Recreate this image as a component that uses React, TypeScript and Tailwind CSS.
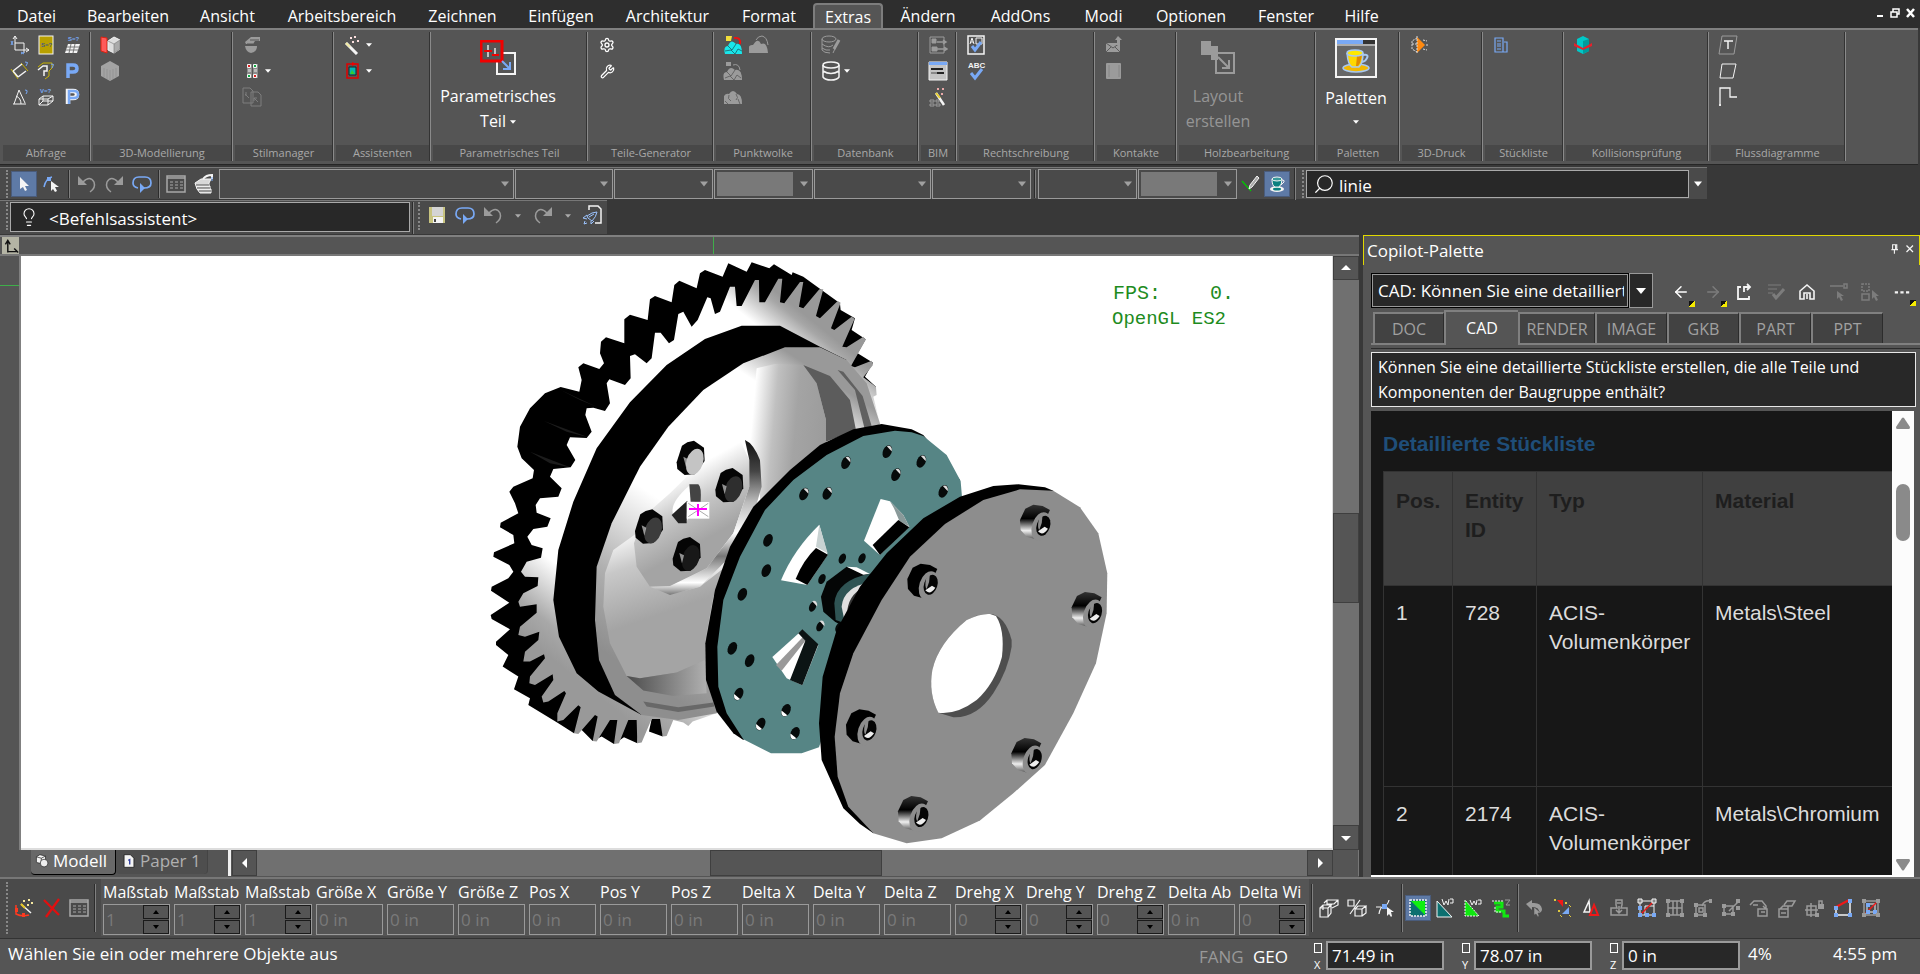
import type { ReactNode } from 'react';
import { Settings, Wrench, ArrowLeft, ArrowRight, Lightbulb, Search } from 'lucide-react';

const W = '#f4f4f4';
const G = '#9b9b9b';
const B = '#79a9f5';

/* All toolbar glyphs are drawn in a 20x20 box */
const glyphs: Record<string, ReactNode> = {
  coords: (
    <g fill="none" stroke={W}>
      <path d="M5 1v14h14M3 4l2-3 2 3M16 13l3 2-3 2M5 8h9v10" />
      <path d="M1 6l2 4M3 6l-2 4M11 17l3 2M14 17l-3 2" stroke={B} />
    </g>
  ),
  area: (
    <g>
      <rect x="3" y="1" width="14" height="18" fill="#b8a000" stroke={W} />
      <text x="5" y="12" fontSize="6" fontFamily="Liberation Sans" fontWeight="bold" fill="#4a5a80">S=?</text>
    </g>
  ),
  surface: (
    <g>
      <text x="6" y="6" fontSize="6" fontFamily="Liberation Sans" fontWeight="bold" fill={B}>S=?</text>
      <path d="M6 9h12l-3 9H3z" fill={W} />
      <path d="M5 12h12M4 15h12M9 9l-2 9M13 9l-2 9" stroke="#777" fill="none" />
    </g>
  ),
  dist: (
    <g fill="none">
      <path d="M1 8l7 10M11 2l7 8" stroke="#c8b400" />
      <path d="M3 10l9-7M8 16l8-6M3 10l5 6" stroke={W} strokeWidth="1.500" />
      <path d="M15 1q4 0 2 2l-1 2" stroke={B} />
    </g>
  ),
  poly: (
    <g fill="none">
      <path d="M2 6l5-4h9v5l-3 3v5l-4 3" stroke="#c8b400" />
      <path d="M2 9l5-4h4v5h-3v5" stroke={W} strokeWidth="1.500" />
      <path d="M15 3q4 0 2 2l-1 2" stroke={B} />
    </g>
  ),
  p: <path d="M6 17V4h5q4 0 4 3.500t-4 3.500H7" fill="none" stroke={B} strokeWidth="3.500" />,
  pw: (
    <g fill="none">
      <path d="M6 17V4h5q4 0 4 3.500t-4 3.500H7" stroke={W} strokeWidth="4.500" />
      <path d="M7 17V4h5q4 0 4 3.500t-4 3.500H7" stroke={B} strokeWidth="2.500" />
    </g>
  ),
  angle: (
    <g fill="none" stroke={W}>
      <path d="M3 17h13M4 17L9 3M9 3l6 13M6 9q5 2 5 8" />
      <path d="M15 3q3 0 2 2l-1 2" stroke={B} />
    </g>
  ),
  volume: (
    <g fill="none" stroke={W}>
      <path d="M3 12h9v6H3zM3 12l4-3h10l-5 3M17 9v5l-5 4M7 9v5h10M7 14l-4 4" />
      <text x="4" y="6" fontSize="6" fontFamily="Liberation Sans" fontWeight="bold" fill={B} stroke="none">V=?</text>
    </g>
  ),
  cubeRed: (
    <g>
      <path d="M1 2l6 1v15l-6-2z" fill="#ff5a5a" stroke="#d21" />
      <path d="M8 6l6-4 6 3v9l-6 4-6-3z" fill="#ddd" stroke={W} />
      <path d="M8 6l6 3v9l6-4V5l-6 4" fill="#aaa" stroke="#777" strokeWidth=".6" />
    </g>
  ),
  cubeGray: (
    <g>
      <path d="M1 5l9-5 9 5v10l-9 5-9-5z" fill="#a3a3a3" />
      <path d="M10 9v11M4 7v9M7 8v10M13 8v10M16 7v9" stroke="#939393" fill="none" />
    </g>
  ),
  hand: (
    <g fill={G}>
      <path d="M3 7l6-5h9v4h-5l-2 3H4z" />
      <path d="M3 11h12q0 6-6 7-5-1-6-7z" />
      <path d="M8 5h9M5 9h6" stroke="#555" />
    </g>
  ),
  swatch: (
    <g>
      <path d="M5 3h5v14H5zM11 3h5v14h-5z" fill="#8a8a8a" />
      <path d="M5.500 3.500h3v3h-3zM11.500 13.500h3v3h-3z" fill="#d22" stroke={W} />
      <path d="M11.500 3.500h3v3h-3zM5.500 13.500h3v3h-3z" fill="#1a4" stroke={W} />
      <path d="M6 8h3v3H6zM12 8h3v3h-3z" fill="#bbb" />
    </g>
  ),
  copy: (
    <g fill="none" stroke="#7e7e7e">
      <path d="M1 1h7l3 3v12H1zM9 5h7l3 3v11H9zM3 7l4 4M4 5v4M12 11l4 4M12 11h3M12 11v3" />
    </g>
  ),
  wand: (
    <g fill="none">
      <path d="M3 8l11 11" stroke={W} strokeWidth="3" />
      <path d="M3 8l4 4" stroke="#efe8a0" strokeWidth="2" />
      <path d="M7 2l2 2M7 4l2-2M11 1l2 2M11 3l2-2M9 6l2 2M9 8l2-2M14 5l2 2M14 7l2-2" stroke="#fce0e0" />
    </g>
  ),
  frame: (
    <g>
      <path d="M4 3h11v14H4z" fill="none" stroke="#e00000" strokeWidth="1.500" />
      <path d="M6 6h7v8H6z" fill="#00b4b4" stroke="#222" />
      <path d="M7 13l2-4 3 4z" fill="#3c3" />
      <path d="M9 1l4 2-4 2z" fill="#e00" />
    </g>
  ),
  cloudCyan: (
    <g>
      <path d="M2 19q-2-8 3-8 3-8 8-2 6-2 6 10z" fill="#19e6ea" />
      <path d="M5 11l4 4 4-6M2 16l6-1 4 4 3-5 4 2" stroke="#187a80" fill="none" />
      <path d="M3 1h6l-1 5H3z" fill="#f2de3a" />
      <path d="M11 3q7-1 6 6" stroke="#e11" strokeWidth="2" fill="none" />
    </g>
  ),
  cloud: (
    <g>
      <path d="M0 18q-2-9 4-8 5-8 8-1 6-3 7 9z" fill={G} />
      <path d="M7 5q2-4 6-4 5 1 6 9" stroke={G} fill="none" />
    </g>
  ),
  cloudGray: (
    <g>
      <path d="M1 19q-2-8 3-8 3-7 8-2 7-2 7 10z" fill={G} />
      <path d="M4 11l4 4 4-6M2 17l5-2 4 4 3-5 4 3" stroke="#666" fill="none" />
      <path d="M3 1h5v4H3z" fill={G} />
      <path d="M10 4q6-2 7 5" stroke={G} fill="none" />
    </g>
  ),
  cloudPlain: (
    <g>
      <path d="M1 17V9q2-3 5-2 4-6 8 0 5 0 5 10z" fill={G} />
      <path d="M6 8q-2 4 2 6M13 7q3 4 0 6M2 14l3 3M15 12l2 5" stroke="#666" fill="none" />
    </g>
  ),
  dbPen: (
    <g fill="none" stroke={G}>
      <ellipse cx="8" cy="4" rx="7" ry="3" />
      <path d="M1 4v11q2 3 8 3M1 9q7 5 11 1M1 13q4 3 8 2M18 5l-6 13" />
      <path d="M18 5l-5 9" strokeWidth="3" />
    </g>
  ),
  db: (
    <g fill="none" stroke={W} strokeWidth="1.500">
      <ellipse cx="10" cy="4" rx="8" ry="3" />
      <path d="M2 4v12q2 3 8 3t8-3V4M2 10q8 5 16 0M2 7v6" />
    </g>
  ),
  bimIn: (
    <g fill="none" stroke={G}>
      <path d="M2 2h14v16H2z" />
      <path d="M4 4h4v4H4zM4 12h5v4H4z" fill={G} />
      <path d="M9 7h8M15 5l3 2-3 2M9 14h10M16 12l3 2-3 2" strokeWidth="1.500" />
    </g>
  ),
  list: (
    <g>
      <path d="M1 1h18v18H1z" fill="#c4c4c4" stroke={W} />
      <path d="M1 1h18v3H1z" fill={B} />
      <path d="M3 8h12M3 12h13" stroke="#222" strokeWidth="2" />
      <path d="M3 12h6" stroke="#888" strokeWidth="2" />
    </g>
  ),
  bimWand: (
    <g fill="none">
      <path d="M8 6l8 12" stroke={W} strokeWidth="2.500" />
      <path d="M8 6l4 5" stroke="#e8d030" strokeWidth="2" />
      <path d="M9 1l2 2M9 3l2-2M14 1l2 2M14 3l2-2M13 6l2 2M13 8l2-2" stroke="#e8a8a8" />
      <path d="M2 13h4v2H2zM8 13h3v2H8zM2 17h4v2H2zM8 17h4v2H8z" stroke={G} />
    </g>
  ),
  spellDoc: (
    <g fill="none">
      <path d="M2 1h16v18H2z" stroke={W} strokeWidth="1.500" />
      <path d="M4 9l2-6 2 6M5 7h2M10 3h6v6h-6z" stroke={W} />
      <path d="M6 11l3 4 6-8" stroke={B} strokeWidth="3" />
    </g>
  ),
  spell: (
    <g fill="none">
      <text x="2" y="7" fontSize="8" fontFamily="Liberation Sans" fontWeight="bold" fill={W}>ABC</text>
      <path d="M5 12l4 5 7-9" stroke={B} strokeWidth="3" />
    </g>
  ),
  mail: (
    <g fill={G}>
      <path d="M2 8h14v9H2z" />
      <path d="M2 8l7 5 7-5M2 17l5-5M16 17l-5-5" stroke="#5a5a5a" fill="none" />
      <path d="M14 1l4 4h-2v5h-3V5h-2z" />
    </g>
  ),
  book: (
    <g>
      <rect x="2" y="2" width="15" height="16" rx="1" fill={G} />
      <path d="M5 4v12M15 4v12" stroke="#868686" />
    </g>
  ),
  print3d: (
    <g>
      <path d="M8 2l8 8-8 8z" fill="#ff8a10" />
      <path d="M8 1v18M8 3L3 6v8l5 3M3 9h5M14 5l4 1M14 14l4 1M17 10h3" stroke="#ddd" fill="none" strokeDasharray="2 1" />
    </g>
  ),
  bom: (
    <g fill="none" stroke={B}>
      <path d="M3 3h8v14H3zM12 7h3v10h-4M5 6h4M5 9h4M5 11h4M5 14h4" strokeWidth="1.200" />
    </g>
  ),
  collide: (
    <g>
      <path d="M4 4l6-3 6 3v12l-6 3-6-3z" fill="#00c8c8" />
      <path d="M10 6v13l6-3V4z" fill="#009c9c" />
      <path d="M1 8l9 5 9-5v3l-9 4-9-4z" fill="#e8202a" />
    </g>
  ),
  flowT: (
    <g fill="none" stroke={W}>
      <path d="M4 1h15l-3 18H1z" stroke={G} />
      <path d="M6 6h9M10 6v8" strokeWidth="1.500" />
    </g>
  ),
  flow: <path d="M4 3h14l-3 14H2z" fill="none" stroke={W} />,
  flowLine: <path d="M2 19V1h10v9h6M16 10h3M1 18h2" fill="none" stroke={W} strokeWidth="1.300" />,
  cursor: <path d="M6 3v12l3-2 2 4 2-1-2-4h4z" fill={W} />,
  node: (
    <g>
      <path d="M2 13Q4 4 10 3" stroke={B} strokeWidth="1.500" fill="none" />
      <path d="M5 3h4v4H5z" fill={B} />
      <path d="M9 7v10l2-2 2 3 2-1-2-4h4z" fill={W} />
    </g>
  ),
  undo: (
    <g fill="none" stroke={G} strokeWidth="1.500">
      <path d="M6 8q7-7 11 0 2 6-4 10" />
      <path d="M1 2v9h9z" fill={G} stroke="none" />
    </g>
  ),
  redo: (
    <g fill="none" stroke={G} strokeWidth="1.500">
      <path d="M14 8Q7 1 3 8q-2 6 4 10" />
      <path d="M19 2v9h-9z" fill={G} stroke="none" />
    </g>
  ),
  loop: (
    <g fill="none" stroke={B} strokeWidth="1.700">
      <path d="M6 14q-5-1-5-5 0-6 6-6h6q6 0 6 6 0 5-7 5" />
      <path d="M8 9v10l5-5z" fill={B} stroke="none" />
    </g>
  ),
  sheet: (
    <g fill="none" stroke="#a8a8a8">
      <path d="M1 2h18v16H1zM1 4h18" strokeWidth="1.500" />
      <path d="M4 8h3M9 8h3M14 8h3M4 11h3M9 11h3M14 11h3M4 14h3M9 14h3M14 14h3" />
    </g>
  ),
  layers: (
    <g>
      <path d="M1 9l6-4h10l-2 4v3H2zM2 12h14v3H3zM3 15h14v4H6z" fill="#d8d8d8" stroke={W} />
      <path d="M2 11h13M3 14h13M5 17h12" stroke="#555" />
      <path d="M9 5q3-4 9-4v4" stroke={W} fill="none" strokeWidth="2" />
      <path d="M18 3v4" stroke={B} />
    </g>
  ),
  pencil: (
    <g>
      <path d="M1 7l9 10" stroke="#00c800" strokeWidth="1.300" />
      <path d="M16 2l2 2-7 9-3 2 1-4z" fill="#aaa" stroke={W} />
    </g>
  ),
  cup: (
    <g>
      <ellipse cx="10" cy="15" rx="7" ry="3" fill={W} />
      <ellipse cx="10" cy="15" rx="4" ry="1.500" fill="#0b8080" />
      <path d="M5 5q0 7 3 8h4q3-2 3-8" fill="#0b8080" stroke={W} />
      <ellipse cx="10" cy="5" rx="5" ry="2" fill="#3a9a9a" stroke={W} />
      <path d="M15 6q3 0 2 2l-3 3" fill="none" stroke={W} />
    </g>
  ),
  disk: (
    <g>
      <path d="M2 2h16v16H2z" fill="#c8c480" />
      <path d="M5 2h11v9H5z" fill="#d4d4d4" />
      <path d="M6 12h10v6H6z" fill={W} />
      <path d="M7 14h2v3H7z" fill="#444" />
    </g>
  ),
  docRocket: (
    <g fill="none">
      <path d="M6 5V1h9l3 3v14h-6" stroke={W} strokeWidth="1.500" />
      <path d="M4 11q5-4 10-4-1 5-5 9l-4-3zM4 10l-4 3 4 1M8 16v3l3-3M2 16l-1 3 3-1M6 12l5-3" stroke="#9cc4ff" />
    </g>
  ),
  origin: <path d="M6 18V4M3 8l3-5 3 5M6 17h12M14 13l5 5" stroke="#111" strokeWidth="1.800" fill="none" />,
  tabCube: (
    <g>
      <path d="M2 4l5-3 8 2v6l-5 5-8-2z" fill={W} stroke="#222" />
      <path d="M2 4l7 2 6-3M9 6v6" stroke="#222" fill="none" />
      <circle cx="13" cy="13" r="5.500" fill="#eee" stroke="#222" />
    </g>
  ),
  tabPage: (
    <g>
      <path d="M3 1h9l5 5v13H3z" fill={W} stroke="#111" />
      <path d="M9 9l2-1v7" stroke="#3340a0" fill="none" strokeWidth="2" />
    </g>
  ),
  selWand: (
    <g fill="none">
      <path d="M2 7v9q6 3 13 1" stroke="#ff3a20" strokeWidth="1.500" />
      <path d="M1 10h3v4H1zM8 15h3v4H8z" fill="#ff3a20" />
      <path d="M7 6l10 9" stroke={W} strokeWidth="1.500" />
      <path d="M7 6l4 4" stroke="#e8c820" strokeWidth="2" />
      <path d="M9 2h2v2H9zM14 1h2v2h-2zM17 4h2v2h-2zM13 6h2v2h-2z" fill="#f6e8a0" />
    </g>
  ),
  cross: <path d="M2 2l15 15M17 1L4 19" stroke="#e01010" strokeWidth="2.300" fill="none" />,
  boxPipe: (
    <g fill="none" stroke={W} strokeWidth="1.200">
      <path d="M1 10h8v9H1zM1 10l3-3h8l-3 3M12 7v8l-3 4M4 7v5M5 5l3-3h11v5l-6 3M8 2v4h7l4-4" />
    </g>
  ),
  boxSlash: (
    <g fill="none" stroke={W} strokeWidth="1.200">
      <path d="M1 2h6v6H1zM13 2L3 16M8 11h7v7H8zM8 11l3-3h8l-4 3M19 8v7l-4 3" />
    </g>
  ),
  curveSel: (
    <g fill="none" stroke={W} strokeWidth="1.200">
      <path d="M4 16q1-7 5-8t5-6M1 9h5" />
      <path d="M7 6h5v5H7z" fill={B} stroke="none" />
      <path d="M12 9v9l2-2 2 3 1-1-1-4h3z" fill={W} stroke="none" />
    </g>
  ),
  triBlue: (
    <g>
      <path d="M2 2h16v16H2z" fill="#0c7070" stroke={W} strokeWidth="1.500" strokeDasharray="2 1" />
      <path d="M3 3h14v14z" fill="#10f010" />
    </g>
  ),
  triTeal: (
    <g>
      <path d="M2 3v16h15z" fill="#0c7070" stroke={W} />
      <path d="M7 1l2 6 2-4 2 4 1-6M15 1h3v4h-3" stroke={W} fill="none" />
    </g>
  ),
  triGreen: (
    <g>
      <path d="M2 2v16h14z" fill="#10e810" stroke={W} strokeDasharray="2 1" />
      <path d="M7 2l2 5 2-4 2 4 1-5M15 2h3v4h-3" stroke={W} fill="none" />
    </g>
  ),
  pathGreen: (
    <g fill="none">
      <path d="M3 5h8v4H6v4h7v5h5" stroke="#10e810" strokeWidth="3" />
      <path d="M1 3h11M4 9v5h7" stroke={W} strokeDasharray="2 1" />
      <path d="M14 2h5l-4 5h4" stroke={G} />
    </g>
  ),
  undoSel: (
    <g>
      <path d="M1 6l6-4v3q9-1 10 6 0 3-3 4 1-6-7-6v3z" fill={G} />
      <path d="M9 9v8l2-1 2 3 1-1-1-3h3z" fill={G} stroke="#4a4a4a" strokeWidth=".5" />
    </g>
  ),
  redSel: (
    <g>
      <path d="M4 2h6v7z" fill="#f01818" />
      <path d="M16 9v7h-7z" fill={B} />
      <path d="M1 1l2 2M1 3l2-2M12 4l2 2M12 6l2-2M16 7l2 2M5 12l2 2M5 14l2-2M7 17l2 2M16 17l2 2" stroke="#e0c840" />
    </g>
  ),
  triMirror: (
    <g fill="none" strokeWidth="1.500">
      <path d="M8 3L3 14h6z" stroke={W} />
      <path d="M13 7l-4 10h8z" stroke="#f01818" strokeWidth="2" />
    </g>
  ),
  stamp: (
    <g fill="none" stroke={G} strokeWidth="1.500">
      <path d="M7 2h6v5l-1 3h6v7H2v-7h6L7 7zM2 17h16M8 5h4M10 8v6M7 12l3 3 3-3" />
    </g>
  ),
  nodesSlash: (
    <g fill="none">
      <path d="M3 3h14v14H3zM8 8h9M8 8v9" stroke={W} />
      <path d="M2 18L18 2" stroke="#f01818" strokeWidth="1.500" />
      <path d="M1 8h4v4H1zM1 15h4v4H1zM8 15h4v4H8zM15 15h4v4h-4z" fill={B} />
      <path d="M1 1h4v4H1zM15 1h4v4h-4z" fill="#888" stroke={W} />
    </g>
  ),
  grid: (
    <g fill="none" stroke={G} strokeWidth="1.500">
      <path d="M3 3h14v14H3zM3 10h14M8 3v14M12 3v14" />
      <path d="M1 1h4v4H1zM15 1h4v4h-4zM1 15h4v4H1zM15 15h4v4h-4z" fill={G} stroke="none" />
    </g>
  ),
  nodesCurve: (
    <g fill="none" stroke={G} strokeWidth="1.500">
      <path d="M3 7h9v10H3zM6 10h4v4H6zM9 8q2-6 9-5" />
      <path d="M1 5h4v4H1zM1 15h4v4H1zM10 15h4v4h-4zM16 1h3v4h-3z" fill={G} stroke="none" />
    </g>
  ),
  nodesArrow: (
    <g fill="none" stroke={G} strokeWidth="1.500">
      <path d="M3 8h9v8H3zM8 13L18 3" />
      <path d="M1 6h4v4H1zM1 14h4v4H1zM10 14h4v4h-4zM15 8h4v4h-4zM15 1h4v4h-4z" fill={G} stroke="none" />
    </g>
  ),
  turnBox: (
    <g fill="none" stroke={G} strokeWidth="1.500">
      <path d="M1 7l4-4h8l4 5v3M4 7h5M9 11h9v7H9zM12 14h4M14 8l3 3" />
    </g>
  ),
  boxBack: (
    <g fill="none" stroke={G} strokeWidth="1.500">
      <path d="M7 7l3-4h8l-3 5H6l-3 3M2 11h9v8H2zM4 15h5M11 8v5" />
    </g>
  ),
  lockBox: (
    <g fill="none" stroke={G} strokeWidth="1.500">
      <path d="M2 8h9v9H2zM6 5v14M0 12h13M14 7V3h3v4" />
      <path d="M13 6h6v5h-6zM10 15h4v4h-4z" fill={G} stroke="none" />
    </g>
  ),
  quad: (
    <g fill="none">
      <path d="M3 10v7h14V3" stroke={W} strokeWidth="1.500" />
      <path d="M3 9L16 2" stroke="#f01818" strokeWidth="2" />
      <path d="M1 8h4v4H1zM1 15h4v4H1zM15 15h4v4h-4zM15 1h4v4h-4z" fill={B} />
    </g>
  ),
  gridRed: (
    <g fill="none">
      <path d="M3 3h14v14H3z" stroke={G} strokeWidth="1.500" />
      <path d="M6 6h8v8H6z" stroke={W} />
      <path d="M3 17L17 3" stroke="#f01818" strokeWidth="1.500" />
      <path d="M5 5h4v4H5zM5 12h4v4H5zM12 12h4v4h-4z" fill={B} />
      <path d="M1 1h4v4H1zM15 1h4v4h-4zM1 15h4v4H1zM15 15h4v4h-4z" fill={G} />
    </g>
  ),
  share: <path d="M7 5H4v12h11v-3M10 10V5h6M13 2l3 3-3 3" fill="none" stroke={W} strokeWidth="1.800" />,
  checkList: (
    <g fill="none" stroke="#7c7c7c">
      <path d="M2 3h13M2 7h9M2 11h5" />
      <path d="M7 12l3 4 8-9" strokeWidth="3" />
    </g>
  ),
  home: <path d="M3 9l7-6 7 6v8h-4v-6H7v6H3zM10 12v5" fill="none" stroke={W} strokeWidth="1.600" />,
  selLine: (
    <g fill="none" stroke="#7c7c7c" strokeWidth="1.500">
      <path d="M1 4h13M15 2h3v4h-3z" />
      <path d="M8 9v8l2-2 2 4 2-1-2-4h3z" fill="#7c7c7c" stroke="none" />
    </g>
  ),
  selBoxes: (
    <g fill="none" stroke="#7c7c7c" strokeWidth="1.500">
      <path d="M2 2h7v7H2z" strokeDasharray="2 1" />
      <path d="M2 12h7v6H2z" />
      <path d="M12 8v9l2-2 2 4 2-1-2-4h3z" fill="#7c7c7c" stroke="none" />
    </g>
  ),
  dots: <path d="M1 9h4v3H1zM8 9h4v3H8zM15 9h4v3h-4z" fill={W} />,
  pin: <path d="M6 3h7v8H6zM11 3v8M4 11h11M9 11v7" fill="none" stroke={W} strokeWidth="1.800" />,
  close: <path d="M3 3l13 13M16 3L3 16" fill="none" stroke={W} strokeWidth="2.500" />,
};

function Glyph({ name, className = 'size-5' }: { name: string; className?: string }) {
  return (
    <svg viewBox="0 0 20 20" className={`shrink-0 ${className}`} aria-hidden="true">
      {glyphs[name]}
    </svg>
  );
}

function Arrow({ className = 'size-2 fill-white' }: { className?: string }) {
  return (
    <svg viewBox="0 0 10 10" className={`shrink-0 ${className}`} aria-hidden="true">
      <path d="M0 2h10L5 8z" />
    </svg>
  );
}

function ToolButton({ name, active, className = 'w-7' }: { name: string; active?: boolean; className?: string }) {
  return (
    <button
      type="button"
      aria-label={name}
      className={`flex h-[26px] shrink-0 items-center justify-center ${className} ${active ? 'border border-[#4a5c7c] bg-[#5e7aa6]' : ''}`}
    >
      <Glyph name={name} />
    </button>
  );
}

const menu = [
  { label: 'Datei', w: 'w-[71px]' },
  { label: 'Bearbeiten', w: 'w-28' },
  { label: 'Ansicht', w: 'w-[87px]' },
  { label: 'Arbeitsbereich', w: 'w-[142px]' },
  { label: 'Zeichnen', w: 'w-[99px]' },
  { label: 'Einfügen', w: 'w-[98px]' },
  { label: 'Architektur', w: 'w-[115px]' },
  { label: 'Format', w: 'w-[88px]' },
  { label: 'Extras', w: 'w-[70px]' },
  { label: 'Ändern', w: 'w-[90px]' },
  { label: 'AddOns', w: 'w-[95px]' },
  { label: 'Modi', w: 'w-[71px]' },
  { label: 'Optionen', w: 'w-[104px]' },
  { label: 'Fenster', w: 'w-[86px]' },
  { label: 'Hilfe', w: 'w-[65px]' },
];

function MenuBar() {
  return (
    <nav className="flex h-7 shrink-0 items-end bg-[#2e2e2e] pl-px text-base">
      {menu.map((m) => (
        <button
          key={m.label}
          type="button"
          className={`h-[25px] shrink-0 text-center ${m.w} ${
            m.label === 'Extras' ? 'rounded-t-sm border-2 border-b-0 border-[#7d7d7d] bg-[#555] leading-[22px]' : 'leading-[26px]'
          }`}
        >
          {m.label}
        </button>
      ))}
      <div className="ml-auto flex h-full items-start gap-1.5 pt-2 pr-1">
        <button type="button" aria-label="Minimieren">
          <svg viewBox="0 0 8 10" className="h-2.5 w-2"><path d="M1 8h6" stroke="#fff" strokeWidth="2" /></svg>
        </button>
        <button type="button" aria-label="Wiederherstellen">
          <svg viewBox="0 0 10 10" className="size-2.5"><path d="M1 4h6v5H1zM3 4V1h6v5H7" fill="none" stroke="#fff" strokeWidth="1.500" /></svg>
        </button>
        <button type="button" aria-label="Schließen">
          <svg viewBox="0 0 10 10" className="size-2.5"><path d="M1 1l7 8M8 1L1 9" stroke="#fff" strokeWidth="2.500" /></svg>
        </button>
      </div>
    </nav>
  );
}

function Section({ label, w, children }: { label: string; w: string; children?: ReactNode }) {
  return (
    <div className={`mt-0.5 flex h-[129px] shrink-0 flex-col border-r border-[#8a8a8a] shadow-[inset_-1px_0_0_#333] ${w}`}>
      <div className="flex-1 overflow-hidden pl-1.5">{children}</div>
      <div className="mr-px ml-0.5 h-4 truncate bg-[#484848] text-center text-[11px] leading-4 text-[#a8a8a8]">{label}</div>
    </div>
  );
}

function Tools({ rows }: { rows: string[][] }) {
  return (
    <div>
      {rows.map((r, i) => (
        <div key={i} className="flex">
          {r.map((n) =>
            n === 'arrow' ? (
              <Arrow key={n} className="mt-2.5 size-1.5 fill-white" />
            ) : (
              <ToolButton key={n} name={n} className="w-[26px]" />
            )
          )}
        </div>
      ))}
    </div>
  );
}

function BigButton({ lines, icon, dim, arrow }: { lines: string[]; icon: ReactNode; dim?: boolean; arrow?: 'inline' | 'below' }) {
  return (
    <button type="button" className={`flex w-full flex-col items-center text-base leading-[25px] ${dim ? 'text-[#959595]' : ''}`}>
      {icon}
      {lines.map((l, i) => (
        <span key={l} className="flex items-center gap-1">
          {l}
          {arrow === 'inline' && i === lines.length - 1 && <Arrow className="size-1.5 fill-white" />}
        </span>
      ))}
      {arrow === 'below' && <Arrow className="mt-2 size-1.5 fill-white" />}
    </button>
  );
}

function Ribbon() {
  return (
    <div className="flex h-[139px] shrink-0 flex-col bg-[#383838]">
      <div className="mr-0.5 flex h-[137px] border-t-2 border-[#808080] border-b border-b-[#262626] bg-[#555] pl-px">
        <Section label="Abfrage" w="w-[90px]">
          <Tools rows={[['coords', 'area', 'surface'], ['dist', 'poly', 'p'], ['angle', 'volume', 'pw']]} />
        </Section>
        <Section label="3D-Modellierung" w="w-[142px]"><Tools rows={[['cubeRed'], ['cubeGray']]} /></Section>
        <Section label="Stilmanager" w="w-[101px]"><Tools rows={[['hand'], ['swatch', 'arrow'], ['copy']]} /></Section>
        <Section label="Assistenten" w="w-[97px]"><Tools rows={[['wand', 'arrow'], ['frame', 'arrow']]} /></Section>
        <Section label="Parametrisches Teil" w="w-[157px]">
          <div className="w-[122px]">
            <BigButton
              lines={['Parametrisches', 'Teil']}
              arrow="inline"
              icon={
                <svg viewBox="0 0 36 36" className="mt-2 mb-2 size-9">
                  <path d="M17 13h18v21H17z" fill="none" stroke={W} strokeWidth="2" />
                  <path d="M1 1h21v20H1z" fill="#555" stroke="#f00000" strokeWidth="3" />
                  <path d="M8 5v12M15 8v8" stroke="#c0c0c0" strokeWidth="2" />
                  <path d="M4 11h8M12 15h7" stroke="#f00000" strokeWidth="2" />
                  <path d="M22 21l8 8M30 22v7h-7" fill="none" stroke={B} strokeWidth="2" />
                </svg>
              }
            />
          </div>
        </Section>
        <Section label="Teile-Generator" w="w-[126px]">
          <div className="flex size-[26px] items-center justify-center"><Settings size={16} strokeWidth={2} /></div>
          <div className="flex size-[26px] items-center justify-center"><Wrench size={15} strokeWidth={2} /></div>
        </Section>
        <Section label="Punktwolke" w="w-[98px]"><Tools rows={[['cloudCyan', 'cloud'], ['cloudGray'], ['cloudPlain']]} /></Section>
        <Section label="Datenbank" w="w-[107px]"><Tools rows={[['dbPen'], ['db', 'arrow']]} /></Section>
        <Section label="BIM" w="w-[38px]"><Tools rows={[['bimIn'], ['list'], ['bimWand']]} /></Section>
        <Section label="Rechtschreibung" w="w-[138px]"><Tools rows={[['spellDoc'], ['spell']]} /></Section>
        <Section label="Kontakte" w="w-[82px]"><Tools rows={[['mail'], ['book']]} /></Section>
        <Section label="Holzbearbeitung" w="w-[139px]">
          <div className="w-[70px]">
            <BigButton
              dim
              lines={['Layout', 'erstellen']}
              icon={
                <svg viewBox="0 0 36 36" className="mt-2 mb-2 size-9">
                  <path d="M16 13h18v20H16z" fill="none" stroke={G} strokeWidth="2" />
                  <path d="M1 1h10v5h7v14h-7v-5H1z" fill={G} />
                  <path d="M18 17l11 11M29 20v8h-7" fill="none" stroke={G} strokeWidth="2" />
                </svg>
              }
            />
          </div>
        </Section>
        <Section label="Paletten" w="w-[84px]">
          <div className="w-[68px]">
            <BigButton
              lines={['Paletten']}
              arrow="below"
              icon={
                <svg viewBox="0 0 42 40" className="mt-1.5 mb-2 h-10 w-[42px]">
                  <path d="M1 1h40v38H1z" fill="#666" stroke={W} strokeWidth="2" />
                  <path d="M2 2h26v4H2z" fill={B} />
                  <path d="M28 2h12v4H28z" fill="#333" />
                  <path d="M2 7h38" stroke={W} />
                  <ellipse cx="21" cy="30" rx="13" ry="4" fill="#f2b800" stroke="#a8c8f0" strokeWidth="1.500" />
                  <path d="M12 15q1 12 5 14h7q4-4 4-14" fill="#ffd800" stroke="#a8c8f0" strokeWidth="1.500" />
                  <path d="M22 18q4 0 5-2-1 9-4 12h-2z" fill="#e08a00" />
                  <ellipse cx="20" cy="15" rx="8" ry="3" fill="#ffe800" stroke="#a8c8f0" strokeWidth="1.500" />
                  <path d="M28 17q6-1 4 3-1 3-5 4" fill="none" stroke="#a8c8f0" strokeWidth="2" />
                </svg>
              }
            />
          </div>
        </Section>
        <Section label="3D-Druck" w="w-[83px]"><Tools rows={[['print3d']]} /></Section>
        <Section label="Stückliste" w="w-[81px]"><Tools rows={[['bom']]} /></Section>
        <Section label="Kollisionsprüfung" w="w-[145px]"><Tools rows={[['collide']]} /></Section>
        <Section label="Flussdiagramme" w="w-[137px]"><Tools rows={[['flowT'], ['flow'], ['flowLine']]} /></Section>
      </div>
    </div>
  );
}

function Grip({ className = 'h-7' }: { className?: string }) {
  return <div className={`w-0 shrink-0 border-l-2 border-dotted border-[#888] ${className}`} />;
}

function Divider({ className = 'mx-1 h-7' }: { className?: string }) {
  return <div className={`w-0.5 shrink-0 border-l border-[#2c2c2c] bg-[#808080] ${className}`} />;
}

function Combo({ w, fill }: { w: string; fill?: boolean }) {
  return (
    <button type="button" aria-label="Auswahl" className={`mr-px flex h-[30px] shrink-0 items-center justify-end border border-[#9a9a9a] pr-1 ${w}`}>
      {fill && <span className="mr-auto ml-0.5 h-6 w-[76px] bg-[#797979]" />}
      <Arrow className="size-2 fill-[#a0a0a0]" />
    </button>
  );
}

function Toolbars() {
  return (
    <>
      <div className="flex h-[33px] shrink-0 bg-[#383838]">
        <div className="flex h-8 items-center border-t border-[#777] bg-[#4a4a4a]">
          <Grip className="mr-[3px] ml-1.5 h-7" />
          <ToolButton name="cursor" active className="w-[26px]" />
          <ToolButton name="node" className="ml-0.5 w-[26px]" />
          <Divider className="mr-1 ml-[3px] h-7" />
          <ToolButton name="undo" className="w-[26px]" />
          <ToolButton name="redo" />
          <ToolButton name="loop" />
          <Divider className="mx-0.5 h-7" />
          <ToolButton name="sheet" />
          <ToolButton name="layers" />
          <div className="w-px" />
          <Combo w="w-[295px]" />
          <Combo w="w-[98px]" />
          <Combo w="w-[99px]" />
          <Combo w="w-[99px]" fill />
          <Combo w="w-[117px]" />
          <Combo w="w-[99px]" />
          <Divider className="mx-0.5 h-7" />
          <Combo w="w-[99px]" />
          <Combo w="w-[99px]" fill />
          <ToolButton name="pencil" className="w-[26px]" />
          <ToolButton name="cup" active className="w-[26px]" />
          <Divider className="ml-1 h-8" />
          <Grip className="mr-0.5 ml-1.5 h-7" />
          <label className="flex h-7 w-[383px] items-center gap-1 border border-[#aaa] bg-[#282828] pl-1.5">
            <Search size={22} strokeWidth={1.3} className="-scale-x-100" />
            <input aria-label="Suche" defaultValue="linie" className="w-72 bg-transparent pt-1 text-[17px] leading-6 outline-none" />
          </label>
          <button type="button" aria-label="Suchverlauf" className="flex w-[18px] justify-center">
            <Arrow className="size-2 fill-white" />
          </button>
        </div>
      </div>
      <div className="flex h-[35px] shrink-0 bg-[#383838]">
        <div className="flex h-[34px] border-t border-[#777] bg-[#4a4a4a] pt-px">
          <Grip className="mr-0.5 ml-1.5 h-7" />
          <label className="flex h-[30px] w-[400px] items-center border border-[#aaa] bg-[#282828] pl-2">
            <Lightbulb size={20} strokeWidth={1.3} />
            <input aria-label="Befehl" defaultValue="<Befehlsassistent>" className="ml-2.5 w-80 bg-transparent pt-1 text-[17px] leading-6 outline-none" />
          </label>
          <Divider className="ml-0.5 h-8" />
          <Grip className="mr-[3px] ml-1 h-7" />
          <ToolButton name="disk" />
          <ToolButton name="loop" />
          <ToolButton name="undo" />
          <div className="flex h-7 w-[22px] items-center justify-center"><Arrow className="size-1.5 fill-[#aaa]" /></div>
          <ToolButton name="redo" />
          <div className="flex h-7 w-[22px] items-center justify-center"><Arrow className="size-1.5 fill-[#aaa]" /></div>
          <ToolButton name="docRocket" />
        </div>
      </div>
    </>
  );
}

const gearFace =
  'M712 172L722 175 735 222 750 215 780 140 795 140 800 198 815 198 855 120 867 120 868 187 885 187 925 116 937 116 930 187 943 190 990 126 1000 126 987 200 1000 205 1048 148 1060 148 1038 228 1050 235 1103 183 1112 188 1083 265 1093 270 1145 230 1154 236 1117 320 1130 322 1180 290 1187 300 1143 378 1155 382 1205 362 1209 375 1180 412 1218 440 1220 465 1210 470 1230 550 740 1420 668 1445 655 1458 640 1448 610 1440 590 1488 578 1490 570 1437 545 1437 515 1508 502 1510 500 1440 475 1440 447 1510 432 1512 442 1440 420 1440 380 1505 368 1503 383 1430 375 1425 325 1482 312 1480 332 1402 325 1396 280 1440 262 1445 262 1420 288 1360 283 1353 235 1385 220 1388 215 1370 250 1320 248 1303 195 1335 178 1330 180 1310 225 1255 222 1243 180 1265 160 1265 165 1235 205 1200 208 1175 165 1190 145 1185 150 1160 200 1118 200 1093 150 1100 145 1085 160 1060 203 1038 205 1012 165 1010 153 995 170 965 213 953 218 925 185 915 172 890 190 867 232 860 242 835 200 818 197 795 210 775 265 770 275 745 240 710 250 687 302 682 316 660 290 615 300 592 350 594 365 575 346 525 350 505 370 503 405 513 420 490 410 430 418 418 465 435 482 415 480 348 495 343 530 370 545 355 555 278 572 278 597 310 612 300 625 222 640 215 665 260 683 240Z';
const gearBack =
  'M1110 190L1000 110 968 97 965 105 912 73 898 85 845 67 830 95 775 70 758 110 705 90 690 100 680 145 628 122 613 135 605 187 555 168 540 178 533 240 480 224 463 238 463 310 408 292 393 305 390 340 402 370 388 387 340 370 325 382 335 420 328 455 272 441 225 460 180 505 150 560 142 620 155 655 192 690 188 715 130 740 118 755 135 790 145 820 92 848 90 862 130 885 133 910 72 937 70 950 118 975 130 995 115 1015 65 1040 63 1052 118 1088 62 1125 65 1137 120 1168 78 1205 78 1215 115 1245 98 1280 145 1310 132 1348 180 1375 175 1395 265 1450 312 1480 330 1465 368 1503 395 1490 432 1512 462 1492 502 1510 508 1440 545 1437 537 1475 578 1490 590 1400 900 1000 1218 440 1185 410 1209 368 1163 340 1187 298 1145 270 1155 235 1112 210Z';

const discHoles = [
  [592, 155], [694, 184], [618, 224], [468, 188], [342, 282], [412, 280], [234, 421], [229, 512], [157, 583],
  [127, 745], [179, 782], [146, 882], [288, 931], [212, 972], [315, 1000], [760, 274], [457, 476], [516, 475],
  [396, 537], [368, 620], [390, 679], [447, 683],
];
const bosses = [[1038, 368], [700, 545], [1193, 630], [516, 982], [1012, 1068], [672, 1242]];
const bolts = [[662, 655, '#c4c4c4'], [778, 737, '#2e2e2e'], [537, 861, '#3c3c3c'], [650, 944, '#181818']] as const;

/* Exploded view: gear wheel, brake disc, cover plate */
function Assembly() {
  return (
    <svg className="block h-full w-full" role="img" aria-label="3D-Modell">
      <defs>
        <linearGradient id="face" gradientUnits="userSpaceOnUse" x1="1100" y1="300" x2="300" y2="1300">
          <stop offset="0" stopColor="#999" />
          <stop offset=".02" stopColor="#a6a6a6" />
          <stop offset=".09" stopColor="#fff" />
          <stop offset=".82" stopColor="#fff" />
          <stop offset=".94" stopColor="#a8a8a8" />
          <stop offset="1" stopColor="#999" />
        </linearGradient>
        <linearGradient id="rim" gradientUnits="userSpaceOnUse" x1="1080" y1="420" x2="500" y2="1300">
          <stop offset="0" stopColor="#999" />
          <stop offset=".12" stopColor="#fff" />
          <stop offset=".55" stopColor="#fff" />
          <stop offset=".8" stopColor="#b0b0b0" />
          <stop offset="1" stopColor="#8e8e8e" />
        </linearGradient>
        <linearGradient id="dishR" gradientUnits="userSpaceOnUse" x1="850" y1="500" x2="1068" y2="520">
          <stop offset="0" stopColor="#fff" />
          <stop offset=".3" stopColor="#c0c0c0" />
          <stop offset=".6" stopColor="#a4a4a4" />
          <stop offset="1" stopColor="#9c9c9c" />
        </linearGradient>
        <linearGradient id="dishB" gradientUnits="userSpaceOnUse" x1="490" y1="860" x2="580" y2="1120">
          <stop offset="0" stopColor="#fff" />
          <stop offset=".4" stopColor="#c8c8c8" />
          <stop offset="1" stopColor="#a4a4a4" />
        </linearGradient>
        <linearGradient id="hub" gradientUnits="userSpaceOnUse" x1="640" y1="700" x2="740" y2="880">
          <stop offset="0" stopColor="#fff" />
          <stop offset=".5" stopColor="#c4c4c4" />
          <stop offset="1" stopColor="#a4a4a4" />
        </linearGradient>
        <linearGradient id="lip" x1="0" y1="0" x2="0" y2="1">
          <stop offset="0" stopColor="#111" />
          <stop offset=".2" stopColor="#444" />
          <stop offset=".4" stopColor="#bbb" />
          <stop offset=".6" stopColor="#fff" />
          <stop offset=".75" stopColor="#777" />
          <stop offset=".92" stopColor="#fff" />
          <stop offset="1" stopColor="#777" />
        </linearGradient>
        <linearGradient id="dark" x1="0" x2="1">
          <stop offset="0" stopColor="#4c4c4c" />
          <stop offset="1" stopColor="#b0b0b0" />
        </linearGradient>
        <linearGradient id="boss" x1="0" y1="0" x2="0" y2="1">
          <stop offset="0" stopColor="#333" />
          <stop offset=".4" stopColor="#000" />
          <stop offset=".75" stopColor="#eee" />
          <stop offset="1" stopColor="#555" />
        </linearGradient>
      </defs>

      <g transform="translate(449 -16) scale(.3333)">
        <path d={gearBack} fill="#000" />
        <path d="M272 450L380 500 330 480M222 543L355 592 290 575M180 635L300 682 240 670" fill="#1c1c1c" />
        <path d={gearFace} fill="url(#face)" />
        <path d="M815 257H930L1050 320 1130 360 945 340 820 390 700 470 520 700 425 950 400 1250 515 1425 385 1355 320 1300 267 1190 250 1080 265 930 310 785 380 625 480 487 590 375 705 297Z" fill="#000" />
        <path d="M945 322H1050L1130 360 1190 430 1230 550 740 1420 625 1440 515 1425 435 1365 387 1260 375 1140 380 980 425 850 510 680 595 560 700 450 820 370Z" fill="url(#rim)" />
        <path d="M860 385L915 372 1000 375 1040 430 1068 540V640L900 760 870 800 870 660 830 600 850 500Z" fill="url(#dishR)" />
        <path d="M1000 375L1080 408 1140 480 1158 570 1068 605V540L1040 430Z" fill="#5c5c5c" />
        <path d="M1103 390L1120 395 1178 468 1205 558 1185 570 1155 450Z" fill="#606060" />
        <path d="M430 930L500 880 500 950 540 1040 600 1065 690 1040 780 970 730 1070 706 1200 705 1260 620 1298 510 1315 470 1308 420 1210 400 1100 405 1000Z" fill="url(#dishB)" />
        <path d="M470 1308L510 1315 620 1298 705 1260 710 1360 610 1368 520 1352Z" fill="url(#dark)" />
        <path d="M520 1385L625 1402 730 1388 733 1400 625 1416 530 1400Z" fill="#686868" />
        <path d="M795 568L838 660V740L790 880 710 985 600 1040H540L500 980 492 910 520 830 600 760Z" fill="url(#hub)" />
        <path d="M825 600Q850 610 870 660L875 740 840 860 770 960 690 1040 600 1065 540 1040 600 1038 710 985 790 880 838 740V660Z" fill="url(#lip)" />
        <path d="M660 735L690 745 650 845 610 825Q596 790 660 735Z" fill="#fff" />
        <path d="M658 733H685Q695 740 692 785H662Z" fill="#444" />
        <path d="M605 825L652 782 650 850H625Z" fill="#222" />
        {bolts.map(([x, y, c]) => (
          <g key={x} transform={`translate(${x} ${y})`}>
            <path d="M-10 -48L10 -53 40 -32 42 8 12 48 -18 50 -40 32 -42 12 -26 -38Z" fill="#050505" />
            <ellipse cx="15" cy="6" rx="25" ry="40" fill={c} transform="rotate(18)" />
            <path d="M-22 -5L-8 2 -14 26Z" fill="#ccc" opacity=".7" />
          </g>
        ))}
        <path d="M650 786H718V836H650Z" fill="#fff" />
        <path d="M655 790l60 40M715 790l-60 40" stroke="#aaa" strokeWidth="3" />
        <path d="M657 807H711M684 792V828" stroke="#f0f" strokeWidth="6" />
      </g>

      <g transform="translate(669 144) scale(.3333)">
        <path d="M575 72L665 88 700 105 810 240 160 1020 130 1000 80 935 48 840 46 730 75 570 120 440 190 320 300 210 390 135 490 88Z" fill="#000" />
        <path d="M615 92L665 97 700 108 770 165 812 243 816 290 500 700 387 1042 335 1060H243L160 1018 110 940 85 860 82 740 100 600 150 470 225 330 310 240 410 165 520 108Z" fill="#568585" />
        <path d="M572 297L600 304 640 345 658 380 570 465 522 422Z" fill="#fff" />
        <path d="M600 304L640 345 658 380 628 362 612 325Z" fill="#8a9a9a" />
        <path d="M625 360L658 382 570 465 548 435Z" fill="#000" />
        <path d="M388 374L413 465 352 555 273 541Q310 450 388 374Z" fill="#fff" />
        <path d="M388 374L413 460 378 440Z" fill="#c8d2d2" />
        <path d="M378 444L414 464 352 555 317 537Q340 480 378 444Z" fill="#000" />
        <path d="M337 690L385 735 337 856 290 835 247 771Z" fill="#fff" />
        <path d="M258 795L338 712 346 722 275 812Z" fill="#999" />
        <path d="M325 700L337 688 385 733 337 856 300 840 346 722Z" fill="#0c1414" />
        {discHoles.map(([x, y], i) => (
          <g key={`${x}-${y}`} transform={`translate(${x} ${y}) rotate(25)`}>
            <ellipse rx={i > 15 ? 10 : 13} ry={i > 15 ? 16 : 20} fill="#060a0a" />
            {y > 800 && <path d="M-12 6A13 20 0 0 0 10 12Z" fill="#fff" />}
            {(y < 300 || i > 18) && <path d="M-8 -14A13 20 0 0 1 12 -6Z" fill="#ddd" />}
          </g>
        ))}
        <path d="M470 500L545 525 480 690 435 665 400 635 393 590 410 545Z" fill="#040606" />
        <path d="M470 500L500 502 540 522 520 524Z" fill="#fff" />
        <path d="M545 520Q440 540 433 610L437 660 480 675 520 570Z" fill="#2f5454" />
        <path d="M545 545Q460 560 455 620L462 655 500 620Z" fill="#e0e0e0" />
        <path d="M530 560Q480 575 472 630L510 600Z" fill="#333" />

        <path d="M910 258L985 253 1065 262 1090 272 700 1000 550 1300 510 1272 460 1225 395 1080 387 970 398 830 440 690 510 560 590 460 700 355 810 290Z" fill="#000" />
        <path d="M990 268L1090 272 1170 322 1225 400 1252 520 1250 640 1218 790 1150 940 1065 1095 970 1180 870 1262 755 1315 650 1330 550 1300 475 1220 443 1130 434 1010 450 880 490 760 575 600 660 470 765 372 880 300Z" fill="#8d8d8d" />
        <path d="M900 642Q945 645 965 720L965 740Q955 810 910 880 860 955 790 952L745 938Q715 880 727 810 745 730 830 660 870 640 900 642Z" fill="#4e4e4e" />
        <path d="M900 642L918 648Q945 690 936 770 915 850 860 900 800 945 745 938 715 880 727 810 745 730 830 660 870 640 900 642Z" fill="#fff" />
        {bosses.map(([x, y], i) => (
          <g key={x} transform={`translate(${x} ${y})`}>
            <path d="M-8 -54L20 -50 42 -38 0 50 -28 42 -46 22 -48 -8 -32 -42Z" fill={i === 1 || i === 3 ? '#000' : 'url(#boss)'} />
            <ellipse cx="18" cy="6" rx="27" ry="44" fill="#8d8d8d" transform="rotate(18)" />
            <ellipse cx="24" cy="2" rx="20" ry="31" fill="#050505" transform="rotate(18)" />
            <path d="M6 26Q20 42 36 18L26 12Z" fill="#eee" />
            <path d="M8 -8Q12 -22 20 -24 20 0 10 22 4 16 8 -8Z" fill="#8d8d8d" />
          </g>
        ))}
      </g>

      <g fill="#1e8c1e" fontFamily="Liberation Mono, monospace" fontSize="20">
        <text x="1092" y="43">FPS:</text>
        <text x="1189" y="43">0.</text>
        <text x="1091" y="68" fontSize="19">OpenGL ES2</text>
      </g>
    </svg>
  );
}

function ScrollButton({ dir, className }: { dir: 'up' | 'down' | 'left' | 'right'; className: string }) {
  const paths = { up: 'M0 7h10L5 2z', down: 'M0 3h10L5 8z', left: 'M7 0v10L2 5z', right: 'M3 0v10l5-5z' };
  return (
    <button type="button" aria-label={dir} className={`flex shrink-0 items-center justify-center border border-[#3f3f3f] bg-[#555] ${className}`}>
      <svg viewBox="0 0 10 10" className="size-2.5 fill-white"><path d={paths[dir]} /></svg>
    </button>
  );
}

function Canvas() {
  return (
    <section className="flex min-w-0 flex-1 flex-col bg-[#555]">
      {/* Horizontal ruler */}
      <div className="flex h-[21px] shrink-0 border-t-2 border-b-2 border-t-[#808080] border-b-[#777]">
        <div className="ml-0.5 flex h-[17px] w-[17px] items-center justify-center bg-[#b4b4a4]"><Glyph name="origin" className="size-4" /></div>
        <div className="w-[695px] border-r border-[#3fae4a]" />
      </div>
      <div className="flex min-h-0 flex-1">
        {/* Vertical ruler */}
        <div className="w-[21px] shrink-0 border-r-2 border-[#808080]">
          <div className="h-[30px] border-b border-[#3fae4a]" />
        </div>
        <div className="min-w-0 flex-1 border-r border-b-2 border-[#ddd] bg-white"><Assembly /></div>
        <div className="flex w-[26px] shrink-0 flex-col bg-[#707070]">
          <ScrollButton dir="up" className="h-6" />
          <div className="flex-[234]" />
          <div className="flex-[88] border border-[#3f3f3f] bg-[#555]" />
          <div className="flex-[223]" />
          <ScrollButton dir="down" className="h-[25px]" />
        </div>
      </div>
      <div className="flex h-[27px] shrink-0 pb-px text-[17px] leading-[22px]">
        <div className="ml-[31px] flex h-[25px] w-[85px] items-start gap-1 rounded-b-sm border-r border-b border-black bg-[#686868] pl-1">
          <Glyph name="tabCube" className="mt-1 size-3.5" />
          <a href="#modell">Modell</a>
        </div>
        <div className="flex h-6 w-[92px] items-start gap-1 rounded-b-sm border-r border-[#444] bg-[#4e4e4e] pl-1.5 text-[#b0b0b0]">
          <Glyph name="tabPage" className="mt-1 size-3.5" />
          <a href="#paper">Paper 1</a>
        </div>
        <div className="ml-5 w-[3px] bg-[#f0f0f0]" />
        <div className="ml-px flex min-w-0 flex-1 bg-[#707070]">
          <ScrollButton dir="left" className="w-[25px]" />
          <div className="flex-[454]" />
          <div className="flex-[170] border border-[#3f3f3f] bg-[#555]" />
          <div className="flex-[426]" />
          <ScrollButton dir="right" className="w-[26px]" />
        </div>
        <div className="w-[26px] shrink-0 border-r border-[#777]" />
      </div>
    </section>
  );
}

const tabs = [
  { label: 'DOC', w: 'w-[71px]' },
  { label: 'CAD', w: 'w-[74px]' },
  { label: 'RENDER', w: 'w-[77px]' },
  { label: 'IMAGE', w: 'w-[72px]' },
  { label: 'GKB', w: 'w-[72px]' },
  { label: 'PART', w: 'w-[72px]' },
  { label: 'PPT', w: 'w-[72px]' },
];

const parts = [
  { pos: '1', id: '728', typ: 'ACIS-Volumenkörper', material: 'Metals\\Steel' },
  { pos: '2', id: '2174', typ: 'ACIS-Volumenkörper', material: 'Metals\\Chromium' },
];

/* Yellow fold in a button's lower right corner: it has a drop-down */
function Corner() {
  return <span className="absolute right-0 -bottom-1.5 size-1.5 bg-[linear-gradient(135deg,#111_50%,#f5ea00_50%)]" />;
}

function Palette() {
  return (
    <aside className="ml-1 flex w-[557px] shrink-0 flex-col bg-[#555]">
      <div className="flex h-[30px] shrink-0 items-center border border-b-0 border-[#e0d800] pl-[3px] text-[17px]">
        <h2 className="flex-1 leading-6">Copilot-Palette</h2>
        <button type="button" aria-label="Anheften" className="mr-1 mb-1"><Glyph name="pin" className="size-3" /></button>
        <button type="button" aria-label="Schließen" className="mr-1 mb-1"><Glyph name="close" className="size-2.5" /></button>
      </div>
      <div className="mt-2 flex h-[35px] shrink-0 pl-2">
        <div className="flex w-[258px] border border-black bg-[#282828] text-[17px] outline-1 -outline-offset-2 outline-[#999]">
          <input aria-label="Verlauf" defaultValue="CAD: Können Sie eine detailliert" className="mr-1 min-w-0 flex-1 bg-transparent pl-1.5 outline-none" />
        </div>
        <button type="button" aria-label="Verlauf öffnen" className="flex w-6 items-center justify-center border border-[#999] bg-[#282828]">
          <Arrow className="size-2.5 fill-white" />
        </button>
        <div className="ml-3.5 flex flex-1 items-center justify-between pt-0.5 pr-1">
          <button type="button" aria-label="Zurück" className="relative flex w-7 justify-center"><ArrowLeft size={18} /><Corner /></button>
          <button type="button" aria-label="Vor" className="relative flex w-7 justify-center text-[#7c7c7c]"><ArrowRight size={18} /><Corner /></button>
          <ToolButton name="share" />
          <ToolButton name="checkList" />
          <ToolButton name="home" />
          <ToolButton name="selLine" />
          <ToolButton name="selBoxes" />
          <button type="button" aria-label="Mehr" className="relative flex w-7 justify-center"><Glyph name="dots" className="size-4" /><Corner /></button>
        </div>
      </div>
      <div className="mt-px ml-2 flex h-9 shrink-0 items-end border-b-2 border-[#808080] pl-0.5 text-base">
        {tabs.map((t) => (
          <button
            key={t.label}
            type="button"
            className={`shrink-0 ${t.w} ${
              t.label === 'CAD'
                ? '-mb-0.5 h-[35px] border-t-2 border-l-2 border-[#808080] bg-[#555] pb-0.5'
                : 'h-[31px] border-t-2 border-r border-l-2 border-[#808080] border-r-[#2c2c2c] bg-[#424242] text-[#a0a0a0]'
            }`}
          >
            {t.label}
          </button>
        ))}
      </div>
      <div className="ml-2 h-1 shrink-0 border-b border-[#2c2c2c]" />
      <textarea
        aria-label="Anfrage"
        defaultValue="Können Sie eine detaillierte Stückliste erstellen, die alle Teile und Komponenten der Baugruppe enthält?"
        className="mt-[3px] mr-1 ml-2 h-[55px] shrink-0 resize-none overflow-hidden border border-[#e8e8e8] bg-[#282828] px-1.5 py-0.5 text-base leading-[25px] outline-none"
      />
      <div className="mt-1 mr-1.5 ml-2 flex min-h-0 flex-1 border-b-2 border-white bg-[#171717] [font-family:'Liberation_Sans',sans-serif]">
        <div className="min-w-0 flex-1 overflow-hidden pt-5 pl-3">
          <h3 className="text-[21px] leading-[26px] font-bold text-[#1f4e79]">Detaillierte Stückliste</h3>
          <table className="mt-3.5 w-[700px] table-fixed border-collapse text-left text-[21px] leading-[29px] text-[#dcdcdc]">
            <colgroup>
              <col className="w-[69px]" />
              <col className="w-[84px]" />
              <col className="w-[166px]" />
              <col />
            </colgroup>
            <thead>
              <tr className="h-[114px] bg-[#404040] align-top text-[#1e1e1e]">
                {['Pos.', 'Entity ID', 'Typ', 'Material'].map((h) => (
                  <th key={h} scope="col" className="border border-[#333] pt-3.5 pr-2 pl-3 font-bold">{h}</th>
                ))}
              </tr>
            </thead>
            <tbody>
              {parts.map((p) => (
                <tr key={p.pos} className="h-[201px] align-top">
                  {[p.pos, p.id, p.typ, p.material].map((c, i) => (
                    <td key={i} className="border border-[#333] pt-3 pr-2 pl-3">{c}</td>
                  ))}
                </tr>
              ))}
            </tbody>
          </table>
        </div>
        <div className="flex w-[22px] shrink-0 flex-col items-center bg-[#fcfcfc] pt-1.5 pb-1">
          <svg viewBox="0 0 14 12" className="h-3 w-3.5 fill-[#8a8a8a]"><path d="M6 1q1-1 2 0l6 9q0 2-1 2H1q-1 0-1-2z" /></svg>
          <div className="mt-[55px] h-[57px] w-3.5 rounded-full bg-[#8a8a8a]" />
          <svg viewBox="0 0 14 12" className="mt-auto h-3 w-3.5 fill-[#8a8a8a]"><path d="M6 11q1 1 2 0l6-9q0-2-1-2H1Q0 0 0 2z" /></svg>
        </div>
      </div>
    </aside>
  );
}

const fields = [
  { id: 'sx', label: 'Maßstab', value: '1', spin: true },
  { id: 'sy', label: 'Maßstab', value: '1', spin: true },
  { id: 'sz', label: 'Maßstab', value: '1', spin: true },
  { id: 'gx', label: 'Größe X', value: '0 in' },
  { id: 'gy', label: 'Größe Y', value: '0 in' },
  { id: 'gz', label: 'Größe Z', value: '0 in' },
  { id: 'px', label: 'Pos X', value: '0 in' },
  { id: 'py', label: 'Pos Y', value: '0 in' },
  { id: 'pz', label: 'Pos Z', value: '0 in' },
  { id: 'dx', label: 'Delta X', value: '0 in' },
  { id: 'dy', label: 'Delta Y', value: '0 in' },
  { id: 'dz', label: 'Delta Z', value: '0 in' },
  { id: 'rx', label: 'Drehg X', value: '0', spin: true },
  { id: 'ry', label: 'Drehg Y', value: '0', spin: true },
  { id: 'rz', label: 'Drehg Z', value: '0', spin: true },
  { id: 'da', label: 'Delta Ab', value: '0 in' },
  { id: 'dw', label: 'Delta Wi', value: '0', spin: true },
];

function PropertyBar() {
  return (
    <div className="flex h-[62px] shrink-0 items-center border-t-2 border-b border-t-[#777] border-b-[#333] bg-[#4a4a4a] pb-0.5">
      <Grip className="ml-1.5 h-[52px]" />
      <div className="w-0.5" />
      <ToolButton name="selWand" />
      <ToolButton name="cross" className="w-7" />
      <ToolButton name="sheet" className="w-[26px]" />
      <Divider className="ml-0.5 h-12" />
      <div className="ml-[5px] flex h-[57px] w-[1208px] shrink-0 gap-1 overflow-hidden bg-[#555] pl-0.5">
        {fields.map((f) => (
          <label key={f.id} className="flex w-[67px] shrink-0 flex-col overflow-hidden whitespace-nowrap">
            <span className="h-[25px] text-base leading-[26px]">{f.label}</span>
            <span className="flex h-[31px] border border-[#9a9a9a]">
              <input defaultValue={f.value} className="w-0 min-w-0 flex-1 bg-transparent pl-0.5 text-[17px] text-[#7a7a7a] outline-none" />
              {f.spin && (
                <span className="flex w-[26px] flex-col justify-between">
                  <span className="flex h-3.5 items-center justify-center border border-[#1a1a1a]">
                    <svg viewBox="0 0 6 4" className="h-1 w-1.5"><path d="M0 4h6L3 0z" /></svg>
                  </span>
                  <span className="flex h-3.5 items-center justify-center border border-[#1a1a1a]">
                    <svg viewBox="0 0 6 4" className="h-1 w-1.5"><path d="M0 0h6L3 4z" /></svg>
                  </span>
                </span>
              )}
            </span>
          </label>
        ))}
      </div>
      <Divider className="mr-0.5 ml-0.5 h-12" />
      <ToolButton name="boxPipe" />
      <ToolButton name="boxSlash" />
      <ToolButton name="curveSel" />
      <Divider className="mx-0.5 h-12" />
      <ToolButton name="triBlue" active className="w-[26px]" />
      <ToolButton name="triTeal" />
      <ToolButton name="triGreen" />
      <ToolButton name="pathGreen" />
      <Divider className="mx-0.5 h-12" />
      {['undoSel', 'redSel', 'triMirror', 'stamp', 'nodesSlash', 'grid', 'nodesCurve', 'nodesArrow', 'turnBox', 'boxBack', 'lockBox', 'quad', 'gridRed'].map((n) => (
        <ToolButton key={n} name={n} />
      ))}
    </div>
  );
}

function StatusBar() {
  return (
    <footer className="flex h-[35px] shrink-0 items-center bg-[#555] pl-2 text-[17px]">
      <p className="flex-1 pb-1.5">Wählen Sie ein oder mehrere Objekte aus</p>
      <button type="button" className="w-[54px] text-left text-[#999]">FANG</button>
      <button type="button" className="w-[61px] text-left">GEO</button>
      <div className="flex gap-[18px]">
        {[
          ['X', '71.49 in'],
          ['Y', '78.07 in'],
          ['Z', '0 in'],
        ].map(([axis, value]) => (
          <label key={axis} className="flex">
            <span className="flex w-3 flex-col gap-1 text-[11px] leading-4">
              <span className="mt-0.5 h-2.5 w-2 border border-white" />
              {axis}
            </span>
            <input defaultValue={value} className="h-[29px] w-[118px] border-2 border-[#9a9a9a] bg-[#282828] pl-1 text-[17px] outline-none" />
          </label>
        ))}
      </div>
      <span className="ml-2 w-[85px] pb-1.5">4%</span>
      <time className="w-[87px] pb-1.5">4:55 pm</time>
    </footer>
  );
}

export default function App() {
  return (
    <div className="flex h-screen flex-col overflow-hidden bg-[#383838] text-white [font-family:'Open_Sans','Noto_Sans',sans-serif]">
      <MenuBar />
      <Ribbon />
      <Toolbars />
      <main className="flex min-h-0 flex-1">
        <Canvas />
        <Palette />
      </main>
      <PropertyBar />
      <StatusBar />
    </div>
  );
}
